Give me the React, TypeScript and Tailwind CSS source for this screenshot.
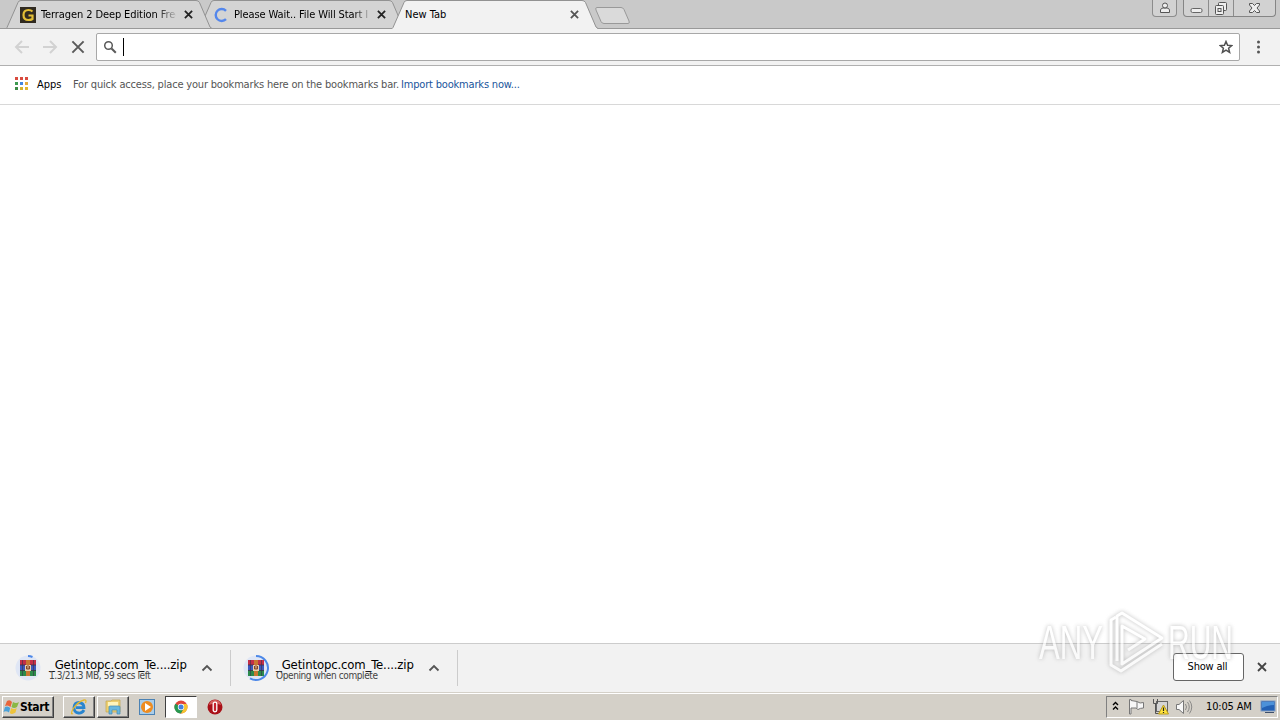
import * as React from "react";
import clsx from "clsx";

interface TabProps {
  title: string;
  icon?: React.ReactNode;
  active?: boolean;
  className?: string;
  titleClass: string;
}

function CloseIcon({ size = 9, color = "#333", stroke = 2 }: { size?: number; color?: string; stroke?: number }) {
  return (
    <svg width={size} height={size} viewBox="0 0 10 10" className="shrink-0">
      <path d="M1 1L9 9M9 1L1 9" stroke={color} strokeWidth={stroke} />
    </svg>
  );
}

function Tab({ title, icon, active, className, titleClass }: TabProps) {
  const fill = active ? "#f2f2f2" : "#d4d4d4";
  return (
    <div className={clsx("relative h-[29px] w-[206px] shrink-0", className)}>
      <svg className="absolute inset-0" width="206" height="29" viewBox="0 0 206 29">
        <path
          d="M0 29L1 27.5L12 2.5Q12.700 .5 15 .5H190Q192.500 .5 193.500 2.500L204 27L206 29Z"
          fill={fill}
        />
        <path
          d="M0 28.500L1 27.5L12 2.5Q12.700 .5 15 .5H190Q192.500 .5 193.500 2.500L204 27L206 28.500"
          fill="none"
          stroke="#929292"
        />
        {!active && <path d="M0 28.500H206" stroke="#999" />}
      </svg>
      <div className="relative flex h-[29px] items-center pl-[13px]">
        {icon && <span className="mr-[5px] ml-[1px] flex w-4">{icon}</span>}
        <span className={clsx("overflow-hidden whitespace-nowrap text-[11px] leading-[14px] text-black", titleClass)}>
          {title}
        </span>
        <span className="absolute top-[10px] left-[178px]">
          <CloseIcon color={active ? "#555" : "#222"} />
        </span>
      </div>
    </div>
  );
}

function WindowControls() {
  return (
    <div className="ml-auto flex h-[17px] pr-[4px]">
      <div className="mr-[6px] flex w-[25px] justify-center rounded-b-[4px] border border-t-0 border-[#8c8c8c] bg-[#d2d2d2]">
        <svg width="12" height="15" viewBox="0 0 12 15" fill="#eee" stroke="#555">
          <path d="M1.500 12.500V10Q2 8 4 8H8Q10 8 10.500 10V12.500Z" />
          <circle cx="6" cy="5.500" r="2.500" />
        </svg>
      </div>
      <div className="flex w-[93px] rounded-b-[4px] border border-t-0 border-[#858585] bg-[#d2d2d2]">
        <div className="flex w-[25px] justify-center border-r border-[#8c8c8c]">
          <svg width="13" height="16" viewBox="0 0 13 16">
            <rect x="1" y="8.500" width="11" height="4" rx="1.500" fill="#eee" stroke="#666" />
          </svg>
        </div>
        <div className="flex w-[25px] justify-center border-r border-[#8c8c8c]">
          <svg width="14" height="16" viewBox="0 0 14 16" fill="#eee" stroke="#555">
            <rect x="4.500" y="2.500" width="8" height="8" rx="1" />
            <rect x="1.500" y="5.500" width="8" height="9" rx="1" />
            <rect x="4" y="8.500" width="3" height="3" />
          </svg>
        </div>
        <div className="flex flex-1 justify-center">
          <svg width="13" height="16" viewBox="0 0 13 16">
            <path
              d="M1.500 3.500H4.500L6.500 5.500L8.500 3.500H11.500V5L9 8L11.500 11V12.500H8.500L6.500 10.500L4.500 12.500H1.500V11L4 8L1.500 5Z"
              fill="#eee"
              stroke="#555"
            />
          </svg>
        </div>
      </div>
    </div>
  );
}

function TabStrip() {
  return (
    <div className="flex h-[29px] border-b border-[#999] bg-[#c9c9c9] pl-[6px]">
      <Tab
        title="Terragen 2 Deep Edition Free"
        className="z-10"
        titleClass="w-[135px] tracking-[-0.1px] [mask-image:linear-gradient(to_right,black_115px,transparent_138px)]"
        icon={
          <svg width="16" height="16" viewBox="0 0 16 16">
            <rect width="16" height="16" fill="#302a20" />
            <path d="M12.500 4.500Q11 3 8.500 3Q3.500 3 3.500 8Q3.500 13 8.500 13Q11 13 12.500 12V8.500H8.500" fill="none" stroke="#e2bd35" strokeWidth="2.200" />
          </svg>
        }
      />
      <Tab
        title="Please Wait.. File Will Start In"
        className="-ml-[13px]"
        titleClass="w-[135px] tracking-[-0.1px] [mask-image:linear-gradient(to_right,black_120px,transparent_138px)]"
        icon={
          <svg width="16" height="16" viewBox="0 0 16 16">
            <path d="M13 3.800A6 6 0 1 0 13 12.200" fill="none" stroke="#5487ec" strokeWidth="2.400" />
          </svg>
        }
      />
      <Tab title="New Tab" active className="z-20 -ml-[13px]" titleClass="w-[150px]" />
      <svg width="38" height="28" viewBox="0 0 38 28" className="-ml-[4px]">
        <path d="M3 7.500H27Q29 7.500 30 9.500L35 21Q36 23.500 34 23.500H10Q8 23.500 7 21.500L2 10Q1 7.500 3 7.500Z" fill="#dadada" stroke="#999" />
      </svg>
      <WindowControls />
    </div>
  );
}

function Toolbar() {
  return (
    <div className="flex h-[37px] items-center border-b border-[#b0b0b0] bg-[#f2f2f2] pl-[14px]">
      <svg width="16" height="16" viewBox="0 0 16 16" fill="none" stroke="#d2d2d2" strokeWidth="2">
        <path d="M15 8H2.500M8 2L2 8L8 14" />
      </svg>
      <svg className="ml-[12px]" width="16" height="16" viewBox="0 0 16 16" fill="none" stroke="#d2d2d2" strokeWidth="2">
        <path d="M1 8H13.500M8 2L14 8L8 14" />
      </svg>
      <span className="ml-[13px]">
        <CloseIcon size={14} color="#5a5a5a" stroke={1.400} />
      </span>
      <div className="ml-[11px] flex h-[28px] w-[1144px] items-center rounded-[2px] border border-[#a8a8a8] bg-white px-[6px]">
        <svg width="14" height="14" viewBox="0 0 14 14" fill="none" stroke="#5a5a5a">
          <circle cx="5.500" cy="5.500" r="3.800" strokeWidth="1.500" />
          <path d="M8.500 8.500L12.800 12.800" strokeWidth="2" />
        </svg>
        <span className="ml-[6px] h-[18px] w-px bg-black" />
        <svg className="ml-auto" width="14" height="14" viewBox="0 0 14 14" fill="none" stroke="#505050" strokeWidth="1.500">
          <path d="M7 1.500L8.600 5.300L12.800 5.600L9.600 8.300L10.600 12.400L7 10.200L3.400 12.400L4.400 8.300L1.200 5.600L5.400 5.300Z" />
        </svg>
      </div>
      <svg className="ml-[16px]" width="5" height="14" viewBox="0 0 5 14" fill="#555">
        <circle cx="2.500" cy="2" r="1.500" />
        <circle cx="2.500" cy="7" r="1.500" />
        <circle cx="2.500" cy="12" r="1.500" />
      </svg>
    </div>
  );
}

const appDots = ["#d94b3f", "#d94b3f", "#d94b3f", "#3d9a50", "#4286e0", "#e5a93a", "#3d8a45", "#d5b22e", "#e0b52e"];

function BookmarksBar() {
  return (
    <div className="flex h-[39px] items-center border-b border-[#d8d8d8] bg-white pl-[15px] text-[11px] whitespace-nowrap">
      <div className="mb-[3px] grid grid-cols-3 gap-[2px]">
        {appDots.map((color, i) => (
          <span key={i} className="h-[3px] w-[3px]" style={{ backgroundColor: color }} />
        ))}
      </div>
      <span className="ml-[9px] w-[36px] text-black">Apps</span>
      <span className="w-[328px] tracking-[-0.18px] text-[#555]">
        For quick access, place your bookmarks here on the bookmarks bar.
      </span>
      <span className="tracking-[-0.18px] text-[#20559c]">Import bookmarks now...</span>
    </div>
  );
}

function ArchiveIcon({ progress }: { progress: string }) {
  return (
    <svg width="28" height="28" viewBox="0 0 28 28" className="-mt-px">
      <circle cx="14" cy="14" r="12.500" fill="#dfe6f5" />
      <path d={progress} fill="none" stroke="#4d88e8" strokeWidth="2" />
      <rect x="6" y="6" width="16" height="5" fill="#c42f48" />
      <rect x="6" y="11" width="16" height="5" fill="#3d58bd" />
      <rect x="6" y="16" width="16" height="6" fill="#2c8a4b" />
      <path d="M6 11H22M6 16.500H22" stroke="#38304a" strokeWidth=".8" />
      <path d="M8.500 6V22M19.500 6V22" stroke="#38304a" strokeWidth=".6" />
      <rect x="12" y="6" width="4" height="16" fill="#c97732" />
      <rect x="11" y="11" width="6" height="6" fill="#e8cfae" />
      <path d="M12.500 12V15H15.500V12M14 11V15" stroke="#864729" fill="none" />
    </svg>
  );
}

function DownloadItem({ status, progress, first }: { status: string; progress: string; first?: boolean }) {
  return (
    <div className={clsx("flex h-[36px] items-center border-r border-[#ccc]", first ? "w-[231px] pl-[14px]" : "w-[227px] pl-[11px]")}>
      <ArchiveIcon progress={progress} />
      <div className={clsx("mt-[2px] w-[148px] whitespace-nowrap", first ? "ml-[7px]" : "ml-[6px]")}>
        <div className="text-[13px] leading-[13px] tracking-[-0.15px] text-black">_Getintopc.com_Te....zip</div>
        <div className="text-[10px] leading-[9px] tracking-[-0.4px] text-[#444]">{status}</div>
      </div>
      <svg className="ml-[4px]" width="12" height="8" viewBox="0 0 12 8">
        <path d="M1.500 6.500L6 2L10.500 6.500" fill="none" stroke="#555" strokeWidth="1.800" />
      </svg>
    </div>
  );
}

function DownloadShelf() {
  return (
    <div className="flex h-[49px] items-center border-t border-[#ccc] bg-[#f2f2f2]">
      <DownloadItem first status="1.3/21.3 MB, 59 secs left" progress="M14 2A12 12 0 0 1 18.500 3" />
      <DownloadItem status="Opening when complete" progress="M14 2A12 12 0 1 1 8 24.400" />
      <button className="mb-[2px] ml-auto h-[28px] w-[71px] rounded-[3px] border border-[#666] bg-white pr-[2px] text-[11px] tracking-[-0.2px] text-black">
        Show all
      </button>
      <span className="mr-[13px] mb-[2px] ml-[13px]">
        <CloseIcon size={10} color="#444" stroke={1.800} />
      </span>
    </div>
  );
}

const raised = "border border-t-white border-l-white border-r-[#404040] border-b-[#404040] shadow-[inset_-1px_-1px_#808080]";

function Taskbar() {
  return (
    <div className="flex h-[28px] items-center border-t border-[#d4d0c8] bg-[#d4d0c8] shadow-[inset_0_1px_white]">
      <button className={clsx("ml-[2px] flex h-[22px] w-[52px] items-center", raised)}>
        <svg width="17" height="16" viewBox="0 0 17 16" className="shrink-0">
          <path d="M4 2Q7 0 9 3L7.500 8Q5 5.500 2 7Z" fill="#e8653a" />
          <path d="M10 3Q13 5 16 3L14 8Q11 10 8.500 8Z" fill="#8ab844" />
          <path d="M2 8Q5 6.500 7.200 9L6 13.500Q3 11.500 .5 13Z" fill="#4ba1d8" />
          <path d="M8.200 9Q11 11 13.700 9L12.500 13.500Q9 16 6.800 14Z" fill="#eec33b" />
        </svg>
        <span className="text-[12px] leading-none font-bold tracking-[-0.3px] text-black">Start</span>
      </button>
      <div className={clsx("ml-[9px] flex h-[22px] w-[32px] items-center justify-center", raised)}>
        <svg width="18" height="18" viewBox="0 0 18 18" fill="none">
          <path d="M14 12Q12 15.500 8.500 15Q4 14.500 4 9.500Q4.500 4.500 9 4.500Q14 5 14 9.700H6" stroke="#2985cf" strokeWidth="2.800" />
          <path d="M3 15.500Q0 17 3 11Q8 3.500 14 2Q17 1.500 15.500 5" stroke="#e5b82e" strokeWidth="1.300" />
        </svg>
      </div>
      <div className={clsx("ml-[2px] flex h-[22px] w-[32px] items-center justify-center", raised)}>
        <svg width="17" height="17" viewBox="0 0 17 17">
          <path d="M1 3H6L7 2H15V14H1Z" fill="#edcf70" stroke="#c3a64f" strokeWidth=".7" />
          <path d="M3 4H13V8H3Z" fill="#fff5bb" />
          <path d="M4 16V9Q4 8 5 8H14Q15 8 15 9V16H12V12H7V16Z" fill="#68b8df" stroke="#4589b2" strokeWidth=".7" />
        </svg>
      </div>
      <svg className="ml-[10px]" width="16" height="16" viewBox="0 0 16 16">
        <rect x=".5" y=".5" width="15" height="15" fill="#aacde9" stroke="#4b82b4" />
        <circle cx="8" cy="8" r="6" fill="#ee8c20" />
        <path d="M6 4L12 8L6 12Z" fill="white" />
      </svg>
      <div className="ml-[10px] flex h-[22px] w-[32px] items-center justify-center border border-t-[#404040] border-r-white border-b-white border-l-[#404040] bg-white">
        <svg width="14" height="14" viewBox="0 0 14 14">
          <circle cx="7" cy="7" r="6.500" fill="#e0453a" />
          <path d="M7 7L1.300 3.700A6.500 6.500 0 0 0 7 13.500L10 8.500Z" fill="#269850" />
          <path d="M7 4H12.800A6.500 6.500 0 0 1 7 13.500L10 8Z" fill="#f6c430" />
          <circle cx="7" cy="7" r="3.200" fill="white" />
          <circle cx="7" cy="7" r="2.500" fill="#4280df" />
        </svg>
      </div>
      <svg className="ml-[10px]" width="16" height="16" viewBox="0 0 16 16">
        <circle cx="8" cy="8" r="7.500" fill="#a91018" />
        <path d="M2 6Q3 1 8 1Q13 1 14 6Q8 3 2 6Z" fill="#d4605e" />
        <rect x="6.200" y="3.200" width="3.600" height="9.600" rx="1.800" fill="#c6222c" stroke="#fff" strokeWidth="1.300" />
      </svg>
      <div className="mr-[2px] ml-auto flex h-[22px] w-[172px] items-center border border-t-[#808080] border-r-white border-b-white border-l-[#808080] pl-[5px]">
        <svg width="7" height="10" viewBox="0 0 7 10" fill="none" stroke="black" strokeWidth="1.400" className="mb-[2px]">
          <path d="M1 4L3.500 1.500L6 4M1 8.500L3.500 6L6 8.500" />
        </svg>
        <svg className="ml-[9px]" width="17" height="17" viewBox="0 0 17 17" fill="#f7f7f7" stroke="#777">
          <path d="M1.500 1.500V16H3V10H8L10 11.500Q12 10 15.500 10V4.500Q12 6 9 3.500L3 2.500V1.500Z" />
          <path d="M9 4V10" fill="none" />
        </svg>
        <svg className="ml-[7px]" width="17" height="17" viewBox="0 0 17 17">
          <rect x="4.500" y="3.500" width="11" height="10" fill="#d5d5d5" stroke="#666" />
          <path d="M1.500 1V5.500H5.500V1M3.500 5V15.500H8" fill="none" stroke="#555" />
          <path d="M11.500 7L16.500 16H6.500Z" fill="#ffe33d" stroke="#b99b1b" />
          <path d="M11.500 9.500V13M11.500 14V15" stroke="#222" strokeWidth="1.200" />
        </svg>
        <svg className="ml-[6px]" width="19" height="16" viewBox="0 0 19 16" fill="none" stroke="#777">
          <path d="M1.500 5.500H4L8.500 1.500V14.500L4 10.500H1.500Z" fill="#f8f8f8" />
          <path d="M10.500 5Q12.500 8 10.500 11M12.500 3Q16 8 12.500 13M14.500 1.500Q19 8 14.500 14.500" strokeWidth=".8" />
        </svg>
        <span className="mt-[2px] ml-[12px] w-[54px] text-[11px] tracking-[-0.15px] whitespace-nowrap text-black">10:05 AM</span>
        <svg width="17" height="14" viewBox="0 0 17 14">
          <rect x="1" y="1" width="14" height="10" fill="#2361b5" stroke="#7f9ac0" />
          <path d="M2 2H14V5Q8 5 2 8Z" fill="#4c91d9" />
          <path d="M5 12.500H14" stroke="#3d4f6c" />
        </svg>
      </div>
    </div>
  );
}

function Watermark() {
  return (
    <svg
      className="pointer-events-none absolute top-[602px] left-[1030px] drop-shadow-[0_0_2px_#999]"
      width="210"
      height="76"
      viewBox="0 0 210 76"
      fill="none"
      stroke="#fff"
      opacity=".65"
    >
      <g fill="#fff" stroke="none" fontFamily="'Liberation Sans'" fontSize="49">
        <text x="9" y="57" textLength="64" lengthAdjust="spacingAndGlyphs">ANY</text>
        <text x="138" y="57" textLength="65" lengthAdjust="spacingAndGlyphs">RUN</text>
      </g>
      <path d="M87 59V14L92 11L132 36L92 62V24L115 37L98 48" strokeWidth="3" strokeLinejoin="round" />
      <path d="M86 15L81 18V63L91 69L132 42" strokeWidth="3" strokeLinejoin="round" />
    </svg>
  );
}

export default function App() {
  return (
    <div className="relative flex h-[720px] w-[1280px] flex-col overflow-hidden bg-white font-['DejaVu_Sans_Condensed','DejaVu_Sans',sans-serif] [font-stretch:condensed]">
      <TabStrip />
      <Toolbar />
      <BookmarksBar />
      <main className="flex-1 bg-white" />
      <DownloadShelf />
      <Taskbar />
      <Watermark />
    </div>
  );
}
